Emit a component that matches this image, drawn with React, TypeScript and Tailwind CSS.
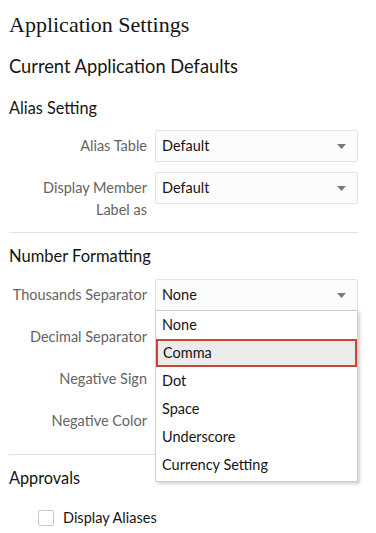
import { useState } from "react";

const sans = "font-['Lato','Noto_Sans',sans-serif]";

const Caret = () => (
  <svg width="9" height="5" viewBox="0 0 9 5" className="shrink-0">
    <path d="M0 0h9L4.5 5z" fill="#7a7a7a" />
  </svg>
);

const SelectBox = ({ value }: { value: string }) => (
  <div className="flex h-[32px] w-[203px] shrink-0 items-center justify-between rounded-[2px] border border-[#e3e3e3] bg-[#fcfcfc] pl-[6px] pr-[11px] text-[14.5px] text-[#161513]">
    <span>{value}</span>
    <Caret />
  </div>
);

const Row = ({ label, children }: { label: React.ReactNode; children?: React.ReactNode }) => (
  <div className="flex gap-[8px]">
    <div className="w-[138px] shrink-0 whitespace-nowrap pt-[5px] text-right text-[14.5px] leading-[22px] text-[#646464]">
      {label}
    </div>
    {children}
  </div>
);

const options = ["None", "Comma", "Dot", "Space", "Underscore", "Currency Setting"];

export default function App() {
  const [hovered] = useState("Comma");

  return (
    <div className={`${sans} min-h-[533px] w-[376px] bg-white pl-[9px] pr-[18px] text-[#161513]`}>
      <h1 className="pt-[12px] font-['Liberation_Serif',serif] text-[22px] leading-[26px]">
        Application Settings
      </h1>
      <h2 className="mt-[16px] text-[18.3px] leading-[24px]">Current Application Defaults</h2>

      <h3 className="mt-[19px] text-[16.3px] leading-[22px]">Alias Setting</h3>
      <div className="mt-[11px] flex flex-col gap-[10px]">
        <Row label="Alias Table">
          <SelectBox value="Default" />
        </Row>
        <Row label={<>Display Member<br />Label as</>}>
          <SelectBox value="Default" />
        </Row>
      </div>
      <div className="mt-[11px] h-px bg-[#e2e2e2]" />

      <h3 className="mt-[12px] text-[16.5px] leading-[22px]">Number Formatting</h3>
      <div className="relative mt-[12px] flex flex-col gap-[10px]">
        <Row label="Thousands Separator">
          <div className="relative">
            <SelectBox value="None" />
            <ul className="absolute left-0 top-[31px] z-10 w-[203px] border border-[#d0d0d0] bg-white pb-[2px] shadow-[2px_2px_3px_rgba(0,0,0,0.18)]">
              {options.map((o) =>
                o === hovered ? (
                  <li
                    key={o}
                    className="flex h-[28px] items-center border-2 border-[#c74634] bg-[#ebebeb] pl-[5px] text-[14.5px]"
                  >
                    {o}
                  </li>
                ) : (
                  <li key={o} className="flex h-[28px] items-center pl-[6px] text-[14.5px]">
                    {o}
                  </li>
                )
              )}
            </ul>
          </div>
        </Row>
        <Row label="Decimal Separator">
          <div className="h-[32px]" />
        </Row>
        <Row label="Negative Sign">
          <div className="h-[32px]" />
        </Row>
        <Row label="Negative Color">
          <div className="h-[32px]" />
        </Row>
      </div>
      <div className="mt-[17px] h-px bg-[#e2e2e2]" />

      <h3 className="mt-[12px] text-[16.3px] leading-[22px]">Approvals</h3>
      <label className="mt-[18px] flex items-center gap-[9px] pl-[29px] text-[14.5px]">
        <span className="h-[16px] w-[16px] rounded-[2px] border border-[#c8c8c8] bg-white" />
        Display Aliases
      </label>
    </div>
  );
}
